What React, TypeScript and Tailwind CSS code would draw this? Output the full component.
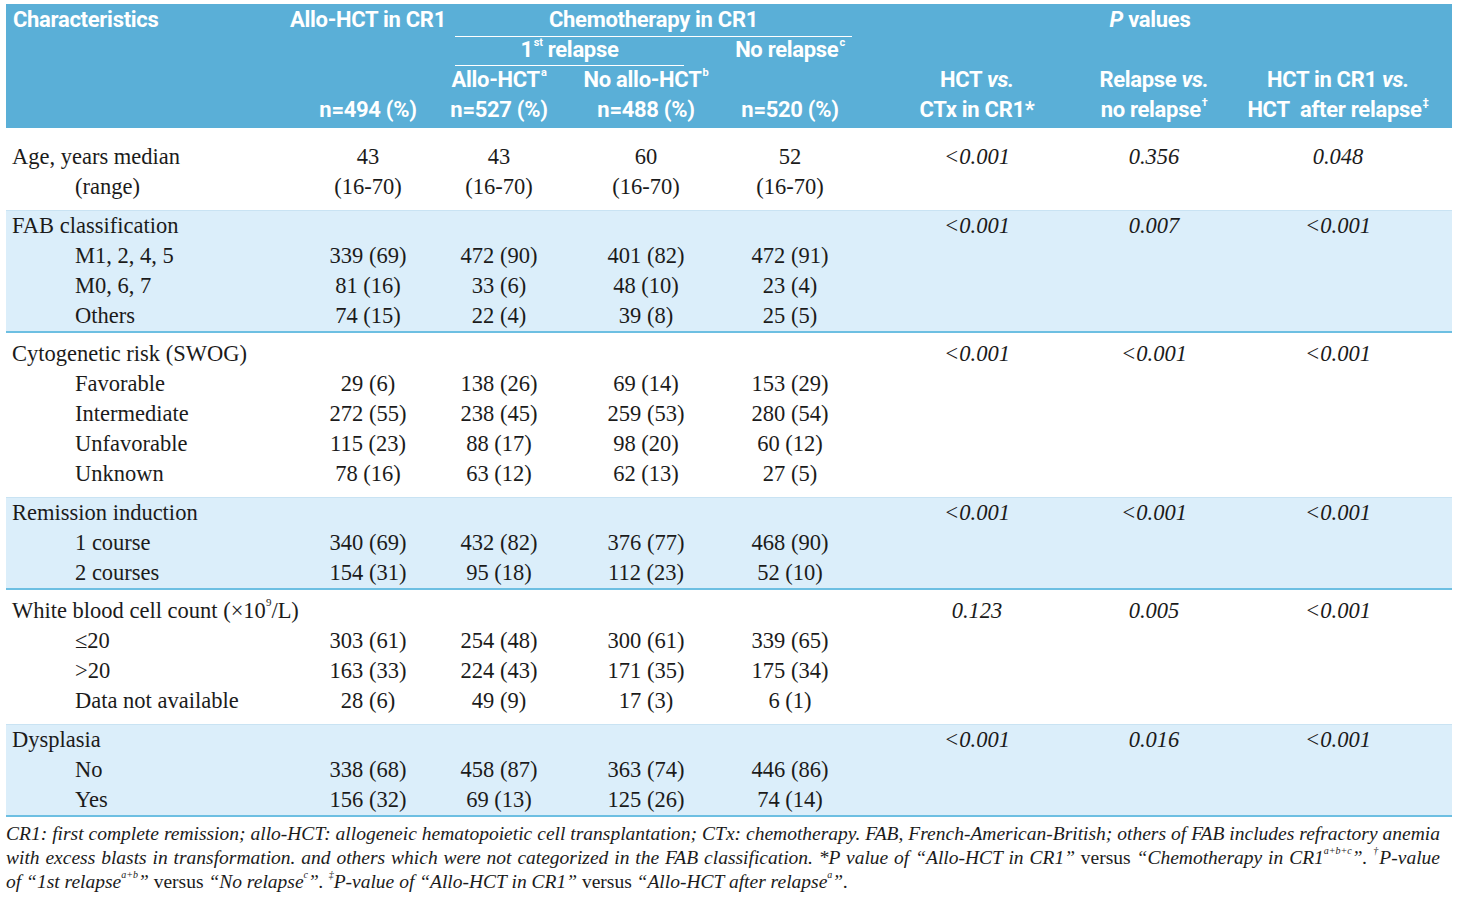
const head = "font-['Roboto','Liberation_Sans',sans-serif] font-bold text-[22px] tracking-[-0.3px] text-white";
const serif = "font-['Liberation_Serif','DejaVu_Serif',serif]";

// column widths shared by the header and the body rows
const COL = {
  label: "w-[292px] shrink-0",
  c1: "w-[140px] shrink-0",
  c2: "w-[122px] shrink-0",
  c3: "w-[172px] shrink-0",
  c4: "w-[116px] shrink-0",
  p1: "w-[258px] shrink-0",
  p2: "w-[118px] shrink-0 pr-[22px]",
  p3: "w-[228px] shrink-0",
};

type Row = { label: React.ReactNode; sub?: boolean; v?: string[]; p?: string[] };
type Section = { blue: boolean; rows: Row[] };

const sections: Section[] = [
  {
    blue: false,
    rows: [
      { label: "Age, years median", v: ["43", "43", "60", "52"], p: ["<0.001", "0.356", "0.048"] },
      { label: "(range)", sub: true, v: ["(16-70)", "(16-70)", "(16-70)", "(16-70)"] },
    ],
  },
  {
    blue: true,
    rows: [
      { label: "FAB classification", p: ["<0.001", "0.007", "<0.001"] },
      { label: "M1, 2, 4, 5", sub: true, v: ["339 (69)", "472 (90)", "401 (82)", "472 (91)"] },
      { label: "M0, 6, 7", sub: true, v: ["81 (16)", "33 (6)", "48 (10)", "23 (4)"] },
      { label: "Others", sub: true, v: ["74 (15)", "22 (4)", "39 (8)", "25 (5)"] },
    ],
  },
  {
    blue: false,
    rows: [
      { label: "Cytogenetic risk (SWOG)", p: ["<0.001", "<0.001", "<0.001"] },
      { label: "Favorable", sub: true, v: ["29 (6)", "138 (26)", "69 (14)", "153 (29)"] },
      { label: "Intermediate", sub: true, v: ["272 (55)", "238 (45)", "259 (53)", "280 (54)"] },
      { label: "Unfavorable", sub: true, v: ["115 (23)", "88 (17)", "98 (20)", "60 (12)"] },
      { label: "Unknown", sub: true, v: ["78 (16)", "63 (12)", "62 (13)", "27 (5)"] },
    ],
  },
  {
    blue: true,
    rows: [
      { label: "Remission induction", p: ["<0.001", "<0.001", "<0.001"] },
      { label: "1 course", sub: true, v: ["340 (69)", "432 (82)", "376 (77)", "468 (90)"] },
      { label: "2 courses", sub: true, v: ["154 (31)", "95 (18)", "112 (23)", "52 (10)"] },
    ],
  },
  {
    blue: false,
    rows: [
      {
        label: (
          <>
            White blood cell count (×10<sup className="text-[11px] leading-none align-[7px]">9</sup>/L)
          </>
        ),
        p: ["0.123", "0.005", "<0.001"],
      },
      { label: "≤20", sub: true, v: ["303 (61)", "254 (48)", "300 (61)", "339 (65)"] },
      { label: ">20", sub: true, v: ["163 (33)", "224 (43)", "171 (35)", "175 (34)"] },
      { label: "Data not available", sub: true, v: ["28 (6)", "49 (9)", "17 (3)", "6 (1)"] },
    ],
  },
  {
    blue: true,
    rows: [
      { label: "Dysplasia", p: ["<0.001", "0.016", "<0.001"] },
      { label: "No", sub: true, v: ["338 (68)", "458 (87)", "363 (74)", "446 (86)"] },
      { label: "Yes", sub: true, v: ["156 (32)", "69 (13)", "125 (26)", "74 (14)"] },
    ],
  },
];

function Cell({ w, children }: { w: string; children?: React.ReactNode }) {
  return (
    <div className={`${w} flex justify-center whitespace-nowrap`}>
      <span>{children}</span>
    </div>
  );
}

function Sup({ children }: { children: React.ReactNode }) {
  return <sup className="text-[11px] leading-none align-[6px] ml-[1px]">{children}</sup>;
}

function FootSup({ children }: { children: React.ReactNode }) {
  return <sup className="text-[10px] leading-none align-[5px]">{children}</sup>;
}

function Header() {
  return (
    <div className={`${head} bg-[#5aafd7] pt-[1px] pb-[3px] leading-[30px]`}>
      <div className="flex h-[30px]">
        <div className={`${COL.label} pl-[7px]`}>Characteristics</div>
        <Cell w={COL.c1}>Allo-HCT in CR1</Cell>
        <div className="w-[410px] shrink-0 relative">
          <div className="ml-[17px] w-[397px] text-center">Chemotherapy in CR1</div>
          <div className="absolute left-[17px] w-[397px] bottom-[-2px] border-t border-white" />
        </div>
        <div className="w-[604px] shrink-0 text-center">
          <i>P</i> values
        </div>
      </div>
      <div className="flex h-[30px]">
        <div className={COL.label} />
        <div className={COL.c1} />
        <div className="w-[294px] shrink-0 relative">
          <div className="ml-[17px] w-[229px] text-center whitespace-nowrap">
            1<Sup>st</Sup> relapse
          </div>
          <div className="absolute left-[17px] w-[229px] bottom-[-1px] border-t border-white" />
        </div>
        <Cell w={COL.c4}>
          No relapse<Sup>c</Sup>
        </Cell>
      </div>
      <div className="flex h-[30px]">
        <div className={COL.label} />
        <div className={COL.c1} />
        <Cell w={COL.c2}>
          Allo-HCT<Sup>a</Sup>
        </Cell>
        <Cell w={COL.c3}>
          No allo-HCT<Sup>b</Sup>
        </Cell>
        <div className={COL.c4} />
        <Cell w={COL.p1}>
          HCT <i>vs.</i>
        </Cell>
        <Cell w={COL.p2}>
          Relapse <i>vs.</i>
        </Cell>
        <Cell w={COL.p3}>
          HCT in CR1 <i>vs.</i>
        </Cell>
      </div>
      <div className="flex h-[30px]">
        <div className={COL.label} />
        <Cell w={COL.c1}>n=494 (%)</Cell>
        <Cell w={COL.c2}>n=527 (%)</Cell>
        <Cell w={COL.c3}>n=488 (%)</Cell>
        <Cell w={COL.c4}>n=520 (%)</Cell>
        <Cell w={COL.p1}>CTx in CR1*</Cell>
        <Cell w={COL.p2}>
          no relapse<Sup>†</Sup>
        </Cell>
        <Cell w={COL.p3}>
          HCT&nbsp;&nbsp;after relapse<Sup>‡</Sup>
        </Cell>
      </div>
    </div>
  );
}

function BodyRow({ row }: { row: Row }) {
  const v = row.v ?? ["", "", "", ""];
  const p = row.p ?? ["", "", ""];
  return (
    <div className="flex h-[30px] items-center leading-[30px]">
      <div className={`${COL.label} whitespace-nowrap ${row.sub ? "pl-[69px]" : "pl-[6px]"}`}>{row.label}</div>
      <Cell w={COL.c1}>{v[0]}</Cell>
      <Cell w={COL.c2}>{v[1]}</Cell>
      <Cell w={COL.c3}>{v[2]}</Cell>
      <Cell w={COL.c4}>{v[3]}</Cell>
      <Cell w={COL.p1}>
        <i>{p[0]}</i>
      </Cell>
      <Cell w={COL.p2}>
        <i>{p[1]}</i>
      </Cell>
      <Cell w={COL.p3}>
        <i>{p[2]}</i>
      </Cell>
    </div>
  );
}

export default function App() {
  return (
    <div className="min-h-screen bg-white pt-[4px] px-[6px]">
      <div className="w-[1446px]">
        <Header />
        <div className={`${serif} text-[22.5px] text-[#1b1b1b]`}>
          {sections.map((s, i) => (
            <div
              key={i}
              className={
                s.blue
                  ? "bg-[#dbeefa] border-t border-[#c9e3f3] border-b-2 border-b-[#6dbfe2]"
                  : i === 0
                    ? "pt-[14px] pb-[8px]"
                    : "pt-[6px] pb-[8px]"
              }
            >
              {s.rows.map((r, j) => (
                <BodyRow key={j} row={r} />
              ))}
            </div>
          ))}
        </div>
        <div className={`${serif} italic text-[19.5px] leading-[24px] text-[#1b1b1b] pt-[5px] w-[1434px]`}>
          <div className="text-justify [text-align-last:justify] whitespace-nowrap">
            CR1: first complete remission; allo-HCT: allogeneic hematopoietic cell transplantation; CTx: chemotherapy. FAB, French-American-British; others of FAB includes refractory anemia
          </div>
          <div className="text-justify [text-align-last:justify] whitespace-nowrap">
            with excess blasts in transformation. and others which were not categorized in the FAB classification. *P value of “Allo-HCT in CR1” <span className="not-italic">versus</span> “Chemotherapy in CR1
            <FootSup>a+b+c</FootSup>”. <FootSup>†</FootSup>P-value
          </div>
          <div className="whitespace-nowrap">
            of “1st relapse<FootSup>a+b</FootSup>” <span className="not-italic">versus</span> “No relapse<FootSup>c</FootSup>”. <FootSup>‡</FootSup>P-value of “Allo-HCT in CR1” <span className="not-italic">versus</span> “Allo-HCT after relapse<FootSup>a</FootSup>”.
          </div>
        </div>
      </div>
    </div>
  );
}
